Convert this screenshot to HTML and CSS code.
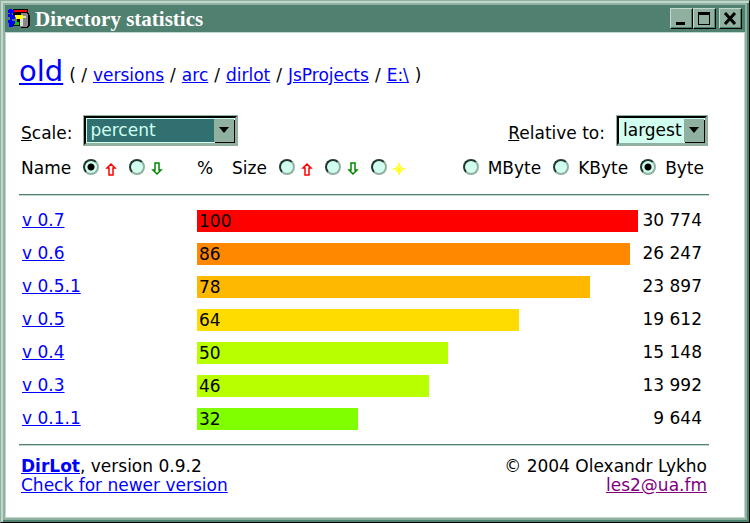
FILE: index.html
```html
<!DOCTYPE html>
<html lang="en">
<head>
  <meta charset="utf-8">
  <title>Directory statistics</title>
  <link rel="stylesheet" href="styles.css">
</head>
<body>
  <div class="window">
    <header class="titlebar">
      <svg class="app-icon" viewBox="0 0 22 22" width="22" height="22" aria-hidden="true" shape-rendering="crispEdges">
        <path fill="#000" d="M5 1h15v4h1v2h1v10l-3 3h-6v-2H5v-2h4V9H5z"/>
        <path fill="#888" d="M13 5h6l1 2v10l-2 2h-5z"/>
        <path fill="#ddd" d="M12 8h6v2h-3v8h-3z"/>
        <path fill="#f00" d="M5 2h14v2H5z"/>
        <path fill="#ff0" d="M6 7h9v4H8V9H6z"/>
        <path fill="#0c0" d="M6 14h5v3H6z"/>
        <path fill="#00f" d="M1 1h3v1h2v3H4v2h3v4H4v2h3v3H5v3H1v-4H0v-3h2v-3H0V6h2V5H0V2h1z"/>
      </svg>
      <h1>Directory statistics</h1>
      <div class="window-buttons">
        <button type="button" aria-label="Minimize">
          <svg viewBox="0 0 22 20" width="22" height="20" shape-rendering="crispEdges"><path d="M5 13h9v3H5z"/></svg>
        </button>
        <button type="button" aria-label="Maximize">
          <svg viewBox="0 0 22 20" width="22" height="20" shape-rendering="crispEdges"><path fill-rule="evenodd" d="M4 3h12v13H4zM5 6v9h10V6z"/></svg>
        </button>
        <button type="button" class="close" aria-label="Close">
          <svg viewBox="0 0 22 20" width="22" height="20"><path fill="none" stroke="#000" stroke-width="3" d="M5 4l10 11M15 4L5 15"/></svg>
        </button>
      </div>
    </header>

    <main>
      <nav class="path">
        <a class="current" href="#old">old</a>
        <span>( /</span>
        <a href="#versions">versions</a>
        <span>/</span>
        <a href="#arc">arc</a>
        <span>/</span>
        <a href="#dirlot">dirlot</a>
        <span>/</span>
        <a href="#jsprojects">JsProjects</a>
        <span>/</span>
        <a href="#e">E:\</a>
        <span>)</span>
      </nav>

      <form class="controls">
        <div class="row selects">
          <label for="scale"><u>S</u>cale:</label>
          <span class="select scale focused">
            <select id="scale"><option>percent</option></select>
            <svg viewBox="0 0 20 23" width="20" height="23" aria-hidden="true"><path d="M5 8h10l-5 6z"/></svg>
          </span>
          <label class="relative-label" for="relative"><u>R</u>elative to:</label>
          <span class="select relative">
            <select id="relative"><option>largest</option></select>
            <svg viewBox="0 0 20 23" width="20" height="23" aria-hidden="true"><path d="M5 8h10l-5 6z"/></svg>
          </span>
        </div>

        <div class="row sorting">
          <span class="name-sort">
            <span>Name</span>
            <input type="radio" name="sort" id="name-up" checked>
            <label for="name-up" aria-label="Name ascending"><svg class="up" viewBox="0 0 12 14" width="12" height="14"><path d="M6 2l4 4H8v7H4V6H2z"/></svg></label>
            <input type="radio" name="sort" id="name-down">
            <label for="name-down" aria-label="Name descending"><svg class="down" viewBox="0 0 12 14" width="12" height="14"><path d="M6 12L2 8h2V1h4v7h2z"/></svg></label>
          </span>
          <span class="percent">%</span>
          <span class="size-sort">
            <span>Size</span>
            <input type="radio" name="sort" id="size-up">
            <label for="size-up" aria-label="Size ascending"><svg class="up" viewBox="0 0 12 14" width="12" height="14"><path d="M6 2l4 4H8v7H4V6H2z"/></svg></label>
            <input type="radio" name="sort" id="size-down">
            <label for="size-down" aria-label="Size descending"><svg class="down" viewBox="0 0 12 14" width="12" height="14"><path d="M6 12L2 8h2V1h4v7h2z"/></svg></label>
            <input type="radio" name="sort" id="unsorted">
            <label for="unsorted" aria-label="Unsorted"><svg class="star" viewBox="0 0 12 14" width="12" height="14"><path d="M6 1v4M6 9v4M0 7h4M8 7h4M3 4l6 6M9 4l-6 6"/></svg></label>
          </span>
          <span class="units">
            <input type="radio" name="unit" id="mbyte"><label for="mbyte">MByte</label>
            <input type="radio" name="unit" id="kbyte"><label for="kbyte">KByte</label>
            <input type="radio" name="unit" id="byte" checked><label for="byte">Byte</label>
          </span>
        </div>
      </form>

      <table class="stats">
        <tr><td><a href="#v07">v 0.7</a></td><td><div class="bar red" style="width: 100%">100</div></td><td>30 774</td></tr>
        <tr><td><a href="#v06">v 0.6</a></td><td><div class="bar dark-orange" style="width: 98.2%">86</div></td><td>26 247</td></tr>
        <tr><td><a href="#v051">v 0.5.1</a></td><td><div class="bar orange" style="width: 89.2%">78</div></td><td>23 897</td></tr>
        <tr><td><a href="#v05">v 0.5</a></td><td><div class="bar yellow" style="width: 73%">64</div></td><td>19 612</td></tr>
        <tr><td><a href="#v04">v 0.4</a></td><td><div class="bar lime" style="width: 57%">50</div></td><td>15 148</td></tr>
        <tr><td><a href="#v03">v 0.3</a></td><td><div class="bar lime" style="width: 52.6%">46</div></td><td>13 992</td></tr>
        <tr><td><a href="#v011">v 0.1.1</a></td><td><div class="bar green" style="width: 36.5%">32</div></td><td>9 644</td></tr>
      </table>

      <footer>
        <div>
          <a href="#dirlot-home"><b>DirLot</b></a>, version 0.9.2<br>
          <a href="#update">Check for newer version</a>
        </div>
        <div class="author">
          © 2004 Olexandr Lykho<br>
          <a class="visited" href="mailto:les2@ua.fm">les2@ua.fm</a>
        </div>
      </footer>
    </main>
  </div>
</body>
</html>
```

FILE: styles.css
```css
:root {
  --face: #90b0a0;
  --light: #c0d8cc;
  --shade: #508070;
  --field: #d0fff0;
}

* {
  box-sizing: border-box;
}

body {
  margin: 0;
  font: 17px/19px "DejaVu Sans", Verdana, sans-serif;
  color: #000;
  background: #000;
}

.window {
  display: flex;
  flex-direction: column;
  min-height: 100vh;
  padding: 4px;
  background: var(--face);
  border: 1px solid;
  border-color: var(--face) #000 #000 var(--face);
  box-shadow: inset 2px 2px var(--light), inset -2px -2px var(--shade);
}

.titlebar {
  display: flex;
  align-items: center;
  height: 27px;
  padding: 0 3px;
  background: var(--shade);
}

.titlebar h1 {
  flex: 1;
  margin: 0 0 0 5px;
  font: bold 21px/26px "Liberation Serif", serif;
  color: #fff;
}

.window-buttons {
  display: flex;
}

.window-buttons button {
  width: 23px;
  height: 21px;
  padding: 0;
  background: var(--face);
  border: 1px solid;
  border-color: var(--light) #000 #000 var(--light);
  box-shadow: inset -1px -1px var(--shade);
}

.window-buttons .close {
  margin-left: 3px;
}

.window-buttons svg {
  display: block;
}

main {
  flex: 1;
  padding: 20px 35px 20px 13px;
  background: #fff;
  border: 1px solid var(--light);
}

a {
  color: #00f;
}

a.visited {
  color: #800080;
}

.path {
  display: flex;
  flex-wrap: wrap;
  align-items: baseline;
  column-gap: 6px;
}

.path .current {
  font-size: 29px;
  line-height: 36px;
}

.row {
  display: flex;
  align-items: center;
  padding-left: 2px;
}

.selects {
  align-items: flex-end;
  margin-top: 27px;
  padding-right: 2px;
}

.selects label {
  line-height: 23px;
}

.select {
  position: relative;
  margin-left: 12px;
}

.select select {
  display: block;
  width: 100%;
  height: 29px;
  padding: 0 4px;
  appearance: none;
  font: inherit;
  color: #000;
  background: var(--field);
  border: 2px solid;
  border-color: #000 var(--face) var(--face) #000;
  outline: 1px solid var(--face);
}

.select svg {
  position: absolute;
  top: 3px;
  right: 3px;
  background: var(--face);
  box-shadow: 1px 1px #000;
}

.scale {
  width: 153px;
}

.focused select {
  color: var(--field);
  background: #307070;
  box-shadow: inset 0 0 0 1px var(--field);
}

.relative {
  width: 90px;
}

.relative-label {
  margin-left: auto;
}

.sorting {
  margin-top: 14px;
  padding-right: 5px;
}

.sorting > span {
  display: flex;
  align-items: center;
}

input[type="radio"] {
  appearance: none;
  width: 16px;
  height: 16px;
  margin: 0 6px 3px 12px;
  border: 2px solid;
  border-color: #203830 var(--face) var(--face) #203830;
  border-radius: 50%;
  background: var(--field);
}

input[type="radio"]:checked {
  background: radial-gradient(circle, #000 3px, var(--field) 4px);
}

.sorting svg {
  display: block;
  fill: none;
  stroke-width: 1.5;
}

.up { stroke: #f00; }
.down { stroke: #080; }
.star { stroke: #ff0; }

.name-sort {
  width: 176px;
}

.percent {
  width: 35px;
}

.units {
  margin-left: auto;
}

.units label {
  margin-left: 3px;
}

.stats {
  width: 100%;
  margin-top: 16px;
  padding: 9px 0;
  border-top: 1px solid var(--shade);
  border-bottom: 1px solid var(--shade);
  border-spacing: 0;
  box-shadow: 0 1px var(--light), inset 0 1px var(--light);
}

.stats td {
  height: 33px;
  padding: 0;
}

.stats td:first-child {
  width: 178px;
  padding-left: 3px;
}

.stats td:last-child {
  width: 71px;
  padding-right: 7px;
  text-align: right;
  white-space: nowrap;
}

.bar {
  height: 22px;
  padding-left: 2px;
  line-height: 22px;
}

.red { background: #f00; }
.dark-orange { background: #ff8800; }
.orange { background: #ffb800; }
.yellow { background: #ffdc00; }
.lime { background: #b8ff00; }
.green { background: #80ff00; }

footer {
  display: flex;
  justify-content: space-between;
  margin-top: 12px;
  padding: 0 2px;
}

.author {
  text-align: right;
}
```
